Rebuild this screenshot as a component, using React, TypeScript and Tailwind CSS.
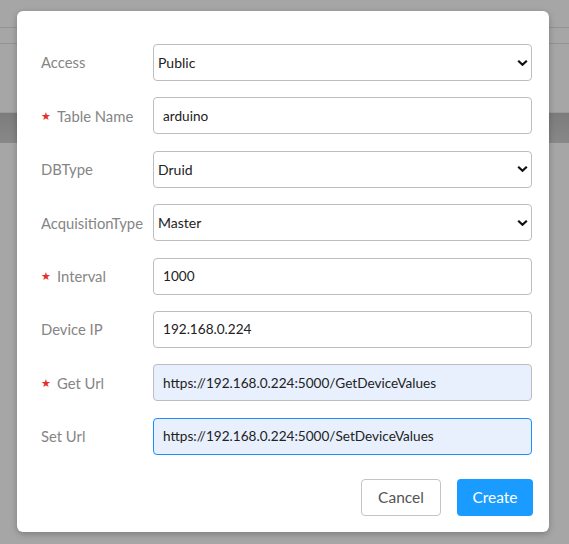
import React from "react";

const font = { fontFamily: '"Lato", "Liberation Sans", sans-serif' };

function Chevron() {
  return (
    <svg
      className="pointer-events-none absolute right-[4px] top-1/2 -translate-y-1/2"
      width="11"
      height="7"
      viewBox="0 0 11 7"
    >
      <path d="M1.2 1.2 L5.5 5.3 L9.8 1.2" fill="none" stroke="#111" strokeWidth="2.2" />
    </svg>
  );
}

function Label({ text, required }: { text: string; required?: boolean }) {
  return (
    <div className="flex items-center text-[14.8px] text-[#858585]">
      {required && <span className="mr-[6px] text-[11px] text-[#e5302a]">★</span>}
      <span>{text}</span>
    </div>
  );
}

function SelectRow({ label, value, options }: { label: string; value: string; options: string[] }) {
  return (
    <>
      <Label text={label} />
      <div className="relative h-[37px]">
        <select
          defaultValue={value}
          className="h-full w-full appearance-none rounded-[4px] border border-[#bdbdbd] bg-white pl-[4px] text-[14px] text-[#222] outline-none"
        >
          {options.map((o) => (
            <option key={o}>{o}</option>
          ))}
        </select>
        <Chevron />
      </div>
    </>
  );
}

function InputRow({
  label,
  value,
  required,
  variant,
}: {
  label: string;
  value: string;
  required?: boolean;
  variant?: "fill" | "focus";
}) {
  const cls =
    variant === "fill"
      ? "border-[#bdbdbd] bg-[#e8f0fe]"
      : variant === "focus"
      ? "border-[#1a8fff] bg-[#e8f0fe]"
      : "border-[#bdbdbd] bg-white";
  return (
    <>
      <Label text={label} required={required} />
      <input
        readOnly
        value={value}
        className={`h-[37px] w-full rounded-[4px] border px-[9px] text-[13.6px] text-[#222] outline-none ${cls}`}
      />
    </>
  );
}

export default function App() {
  return (
    <div className="relative h-[544px] w-[569px] overflow-hidden bg-[#a6a6a6]" style={font}>
      <div className="h-[27px]" />
      <div className="h-[17px] border-y border-[#929292]" />
      <div className="h-[68px]" />
      <div className="h-[31px] border-t border-[#9a9a9a] bg-gradient-to-b from-[#7c7c7c] to-[#888888]" />

      <div className="absolute left-[17px] top-[11px] flex h-[521px] w-[532px] flex-col rounded-[6px] bg-white pl-[24px] pr-[17px] pt-[33px] shadow-[0_2px_6px_rgba(0,0,0,0.25)]">
        <div className="grid grid-cols-[112px_1fr] items-center gap-y-[16.4px]">
          <SelectRow label="Access" value="Public" options={["Public", "Private"]} />
          <InputRow label="Table Name" value="arduino" required />
          <SelectRow label="DBType" value="Druid" options={["Druid", "MySQL"]} />
          <SelectRow label="AcquisitionType" value="Master" options={["Master", "Slave"]} />
          <InputRow label="Interval" value="1000" required />
          <InputRow label="Device IP" value="192.168.0.224" />
          <InputRow
            label="Get Url"
            value="https://192.168.0.224:5000/GetDeviceValues"
            required
            variant="fill"
          />
          <InputRow
            label="Set Url"
            value="https://192.168.0.224:5000/SetDeviceValues"
            variant="focus"
          />
        </div>
        <div className="mt-[24px] flex justify-end gap-[16px]">
          <button className="h-[37px] w-[80px] rounded-[4px] border border-[#c4c4c4] bg-white text-[15.5px] text-[#555]">
            Cancel
          </button>
          <button className="mr-[-1px] h-[37px] w-[76px] rounded-[4px] bg-[#1a9bff] text-[15.5px] text-white">
            Create
          </button>
        </div>
      </div>
    </div>
  );
}
